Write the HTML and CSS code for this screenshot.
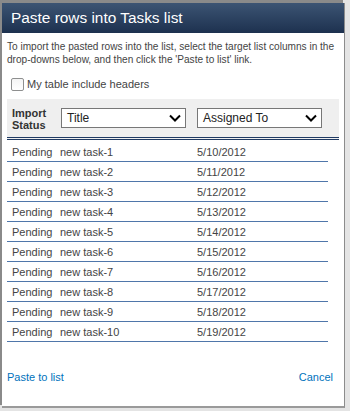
FILE: index.html
```html
<!DOCTYPE html>
<html>
  <head>
    <title>Paste rows into Tasks list</title>
    <link rel="stylesheet" href="styles.css">
  </head>
  <body>
    <div class="dialog">
      <div class="dialog-title">Paste rows into Tasks list</div>

      <div class="dialog-body">
        <p class="intro">
          To import the pasted rows into the list, select the target list columns in the
          drop-downs below, and then click the 'Paste to list' link.
        </p>

        <label class="headers-check">
          <span class="box"></span>
          My table include headers
        </label>

        <div class="map-head">
          <div class="status-label">Import<br>Status</div>
          <div class="pick">Title<span class="caret"><svg width="12" height="8" viewBox="0 0 12 8"><path d="M1 1.5 L6 6.5 L11 1.5" fill="none" stroke="#000" stroke-width="2"/></svg></span></div>
          <div class="pick">Assigned To<span class="caret"><svg width="12" height="8" viewBox="0 0 12 8"><path d="M1 1.5 L6 6.5 L11 1.5" fill="none" stroke="#000" stroke-width="2"/></svg></span></div>
        </div>

        <table class="rows">
          <tr><td>Pending</td><td>new task-1</td><td>5/10/2012</td></tr>
          <tr><td>Pending</td><td>new task-2</td><td>5/11/2012</td></tr>
          <tr><td>Pending</td><td>new task-3</td><td>5/12/2012</td></tr>
          <tr><td>Pending</td><td>new task-4</td><td>5/13/2012</td></tr>
          <tr><td>Pending</td><td>new task-5</td><td>5/14/2012</td></tr>
          <tr><td>Pending</td><td>new task-6</td><td>5/15/2012</td></tr>
          <tr><td>Pending</td><td>new task-7</td><td>5/16/2012</td></tr>
          <tr><td>Pending</td><td>new task-8</td><td>5/17/2012</td></tr>
          <tr><td>Pending</td><td>new task-9</td><td>5/18/2012</td></tr>
          <tr><td>Pending</td><td>new task-10</td><td>5/19/2012</td></tr>
        </table>

        <div class="actions">
          <a href="#">Paste to list</a>
          <a href="#">Cancel</a>
        </div>
      </div>
    </div>
  </body>
</html>
```

FILE: styles.css
```css
body {
  margin: 0;
  background-color: #e4e4e4;
  font-family: "Liberation Sans", Arial, sans-serif;
  font-size: 11px;
  color: #444;
}
.dialog {
  margin: 3px 0 0 2px;
  width: 342px;
  height: 403px;
  border-right: 1px solid #8c8c8c;
  border-bottom: 2px solid #9a9a9a;
  background-color: white;
  box-shadow: -2px -3px 0 #8a8a8a;
}
.dialog-title {
  height: 30px;
  line-height: 30px;
  padding-left: 9px;
  font-size: 15.4px;
  color: white;
  background: linear-gradient(#3c5473, #1d314f);
}
.dialog-body {
  padding: 0 5px;
}
.intro {
  margin: 7px 0 0 0;
  font-size: 10.1px;
  line-height: 13px;
}
.headers-check {
  display: flex;
  align-items: center;
  gap: 3px;
  margin: 11px 0 0 4px;
  height: 14px;
}
.box {
  width: 11px;
  height: 11px;
  border: 1px solid #8e8f8f;
  border-radius: 2px;
  background: linear-gradient(#f4f4f4, #fff);
}
.map-head {
  display: flex;
  align-items: center;
  margin-top: 8px;
  height: 38px;
  padding: 0 0 0 5px;
  background-color: #efefef;
  border-bottom: 3px double #1f3a63;
}
.status-label {
  width: 49px;
  font-weight: bold;
  color: #333;
  line-height: 12px;
  padding-top: 2px;
}
.pick {
  display: flex;
  justify-content: space-between;
  align-items: center;
  width: 114px;
  height: 18px;
  padding: 0 4px 0 5px;
  margin-right: 11px;
  border: 1px solid #777;
  background-color: white;
  color: #222;
  font-size: 12px;
}
.caret svg {
  display: block;
}
.rows {
  border-collapse: collapse;
  width: 321px;
  margin-top: 2px;
}
.rows td {
  height: 19px;
  padding: 0;
  border-bottom: 1px solid #4f76aa;
}
.rows td:first-child {
  width: 48px;
  padding-left: 5px;
}
.rows td:nth-child(2) {
  width: 137px;
}
.actions {
  display: flex;
  justify-content: space-between;
  margin-top: 29px;
  padding-right: 6px;
}
.actions a {
  color: #0072bc;
  text-decoration: none;
}
```
